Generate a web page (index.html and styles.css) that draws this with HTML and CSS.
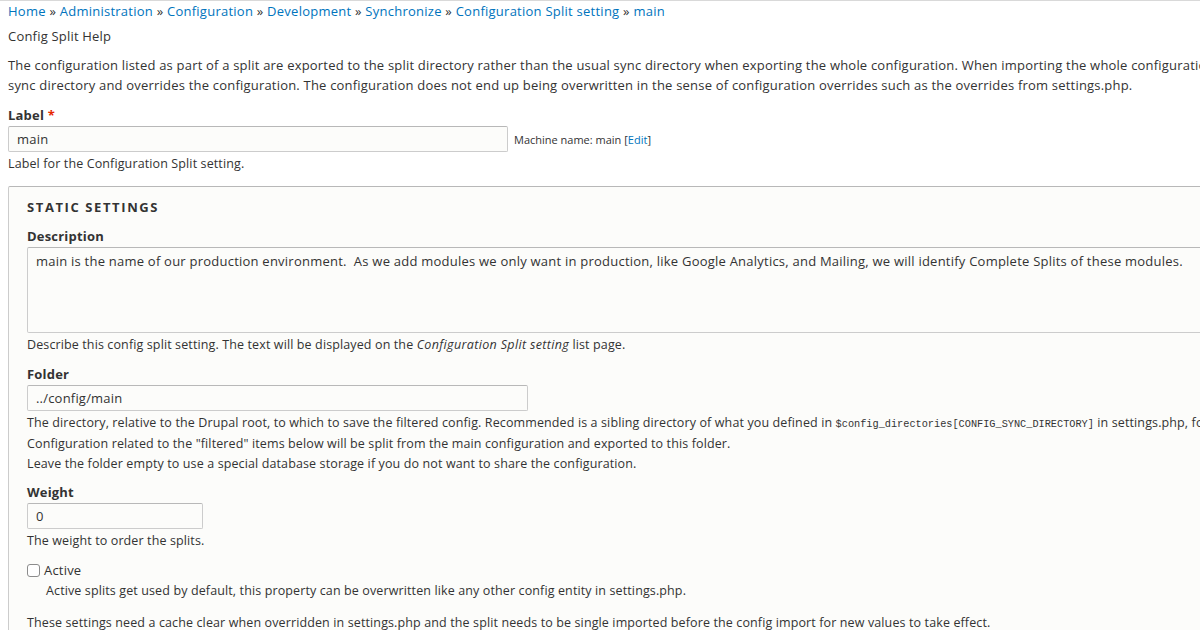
FILE: index.html
```html
<!DOCTYPE html>
<html lang="en">
<head>
<meta charset="utf-8">
<title>Configuration Split setting: main</title>
<link rel="stylesheet" href="styles.css">
</head>
<body>
<div class="page">
  <nav class="breadcrumb">
    <a href="#">Home</a> » <a href="#">Administration</a> » <a href="#">Configuration</a> » <a href="#">Development</a> » <a href="#">Synchronize</a> » <a href="#">Configuration Split setting</a> » <a href="#">main</a>
  </nav>
  <div class="help-title">Config Split Help</div>
  <p class="help">
    <span class="line">The configuration listed as part of a split are exported to the split directory rather than the usual sync directory when exporting the whole configuration. When importing the whole configuration the split directory is merged with the</span>
    <span class="line">sync directory and overrides the configuration. The configuration does not end up being overwritten in the sense of configuration overrides such as the overrides from settings.php.</span>
  </p>

  <div class="form-item">
    <label class="label">Label <span class="req">*</span></label>
    <div class="inline-row">
      <input class="text text-label" type="text" value="main">
      <span class="machine">Machine name: main [<a href="#">Edit</a>]</span>
    </div>
    <div class="desc">Label for the Configuration Split setting.</div>
  </div>

  <section class="fieldset">
    <h2 class="legend">Static settings</h2>

    <div class="form-item">
      <label class="label">Description</label>
      <textarea class="textarea">main is the name of our production environment.  As we add modules we only want in production, like Google Analytics, and Mailing, we will identify Complete Splits of these modules.</textarea>
      <div class="desc">Describe this config split setting. The text will be displayed on the <em>Configuration Split setting</em> list page.</div>
    </div>

    <div class="form-item">
      <label class="label">Folder</label>
      <input class="text text-folder" type="text" value="../config/main">
      <div class="desc">
        <span class="line">The directory, relative to the Drupal root, to which to save the filtered config. Recommended is a sibling directory of what you defined in <code>$config_directories[CONFIG_SYNC_DIRECTORY]</code> in settings.php, for more information consult the README.</span>
        <span class="line">Configuration related to the "filtered" items below will be split from the main configuration and exported to this folder.</span>
        <span class="line">Leave the folder empty to use a special database storage if you do not want to share the configuration.</span>
      </div>
    </div>

    <div class="form-item weight-item">
      <label class="label">Weight</label>
      <input class="text text-weight" type="text" value="0">
      <div class="desc">The weight to order the splits.</div>
    </div>

    <div class="form-item checkbox-item">
      <div class="check-row">
        <input class="checkbox" type="checkbox" id="active">
        <label class="check-label" for="active">Active</label>
      </div>
      <div class="desc check-desc">Active splits get used by default, this property can be overwritten like any other config entity in settings.php.</div>
    </div>

    <p class="note">These settings need a cache clear when overridden in settings.php and the split needs to be single imported before the config import for new values to take effect.</p>
  </section>
</div>
</body>
</html>
```

FILE: styles.css
```css
html, body {
  margin: 0;
  padding: 0;
  background: #fff;
  overflow: hidden;
}

body {
  width: 1200px;
  height: 630px;
  font-family: "Open Sans", "DejaVu Sans", sans-serif;
  font-size: 13px;
  line-height: 20px;
  letter-spacing: 0.2px;
  color: #333;
  border-top: 1px solid #d9d9d9;
  box-sizing: border-box;
}

.page {
  width: 1500px;
  padding: 0 8px;
}

a {
  color: #0074bd;
  text-decoration: none;
}

.breadcrumb {
  white-space: nowrap;
  color: #333;
  letter-spacing: 0.25px;
}

.help-title {
  margin-top: 5px;
}

.help {
  margin: 9px 0 0;
}

.line {
  display: block;
  white-space: nowrap;
}

.form-item {
  margin-top: 10px;
}

.fieldset .form-item {
  margin-top: 9px;
}

.fieldset .weight-item {
  margin-top: 8px;
}

.label {
  display: block;
  font-weight: bold;
  line-height: 20px;
}

.req {
  color: #e62600;
}

.text,
.textarea {
  display: block;
  box-sizing: border-box;
  font-family: inherit;
  font-size: 13px;
  letter-spacing: 0.2px;
  color: #333;
  background: #fcfcfa;
  border: 1px solid #ccc;
  border-top-color: #b8b8b8;
  border-radius: 2px;
  padding: 0 8px;
  margin: 1px 0 0;
  outline: none;
}

.text {
  height: 26px;
  line-height: 24px;
}

.text-label { width: 500px; }
.text-folder { width: 501px; }
.text-weight { width: 176px; }

.inline-row {
  display: flex;
  align-items: center;
  gap: 6px;
}

.machine {
  font-size: 11px;
  letter-spacing: 0;
  white-space: nowrap;
  padding-top: 2px;
}

.desc {
  font-size: 12.5px;
  line-height: 20px;
  letter-spacing: 0.12px;
  margin-top: 2px;
  color: #333;
}

.desc em {
  letter-spacing: 0.35px;
}

.fieldset {
  margin-top: 12px;
  width: 1400px;
  background: #fcfcfa;
  border: 1px solid #ccc;
  border-top-color: #b8b8b8;
  border-radius: 2px;
  padding: 10px 18px 20px;
  box-sizing: border-box;
}

.legend {
  margin: 0;
  font-size: 13px;
  line-height: 20px;
  font-weight: bold;
  text-transform: uppercase;
  letter-spacing: 1.6px;
}

.textarea {
  width: 1250px;
  height: 86px;
  padding: 3px 8px;
  line-height: 20px;
  letter-spacing: 0.23px;
  resize: none;
}

code {
  font-family: "Liberation Mono", monospace;
  font-size: 10.25px;
  letter-spacing: 0;
}

.check-row {
  display: flex;
  align-items: center;
  gap: 4px;
  line-height: 20px;
}

.checkbox {
  appearance: none;
  -webkit-appearance: none;
  width: 13px;
  height: 13px;
  margin: 0;
  border: 1px solid #8c8c8c;
  border-radius: 3px;
  background: #fff;
  box-sizing: border-box;
}

.check-label {
  font-size: 13px;
}

.check-desc {
  margin-top: 1px;
  padding-left: 19px;
}

.note {
  margin: 12px 0 0;
  font-size: 12.5px;
  letter-spacing: 0.12px;
}
```
